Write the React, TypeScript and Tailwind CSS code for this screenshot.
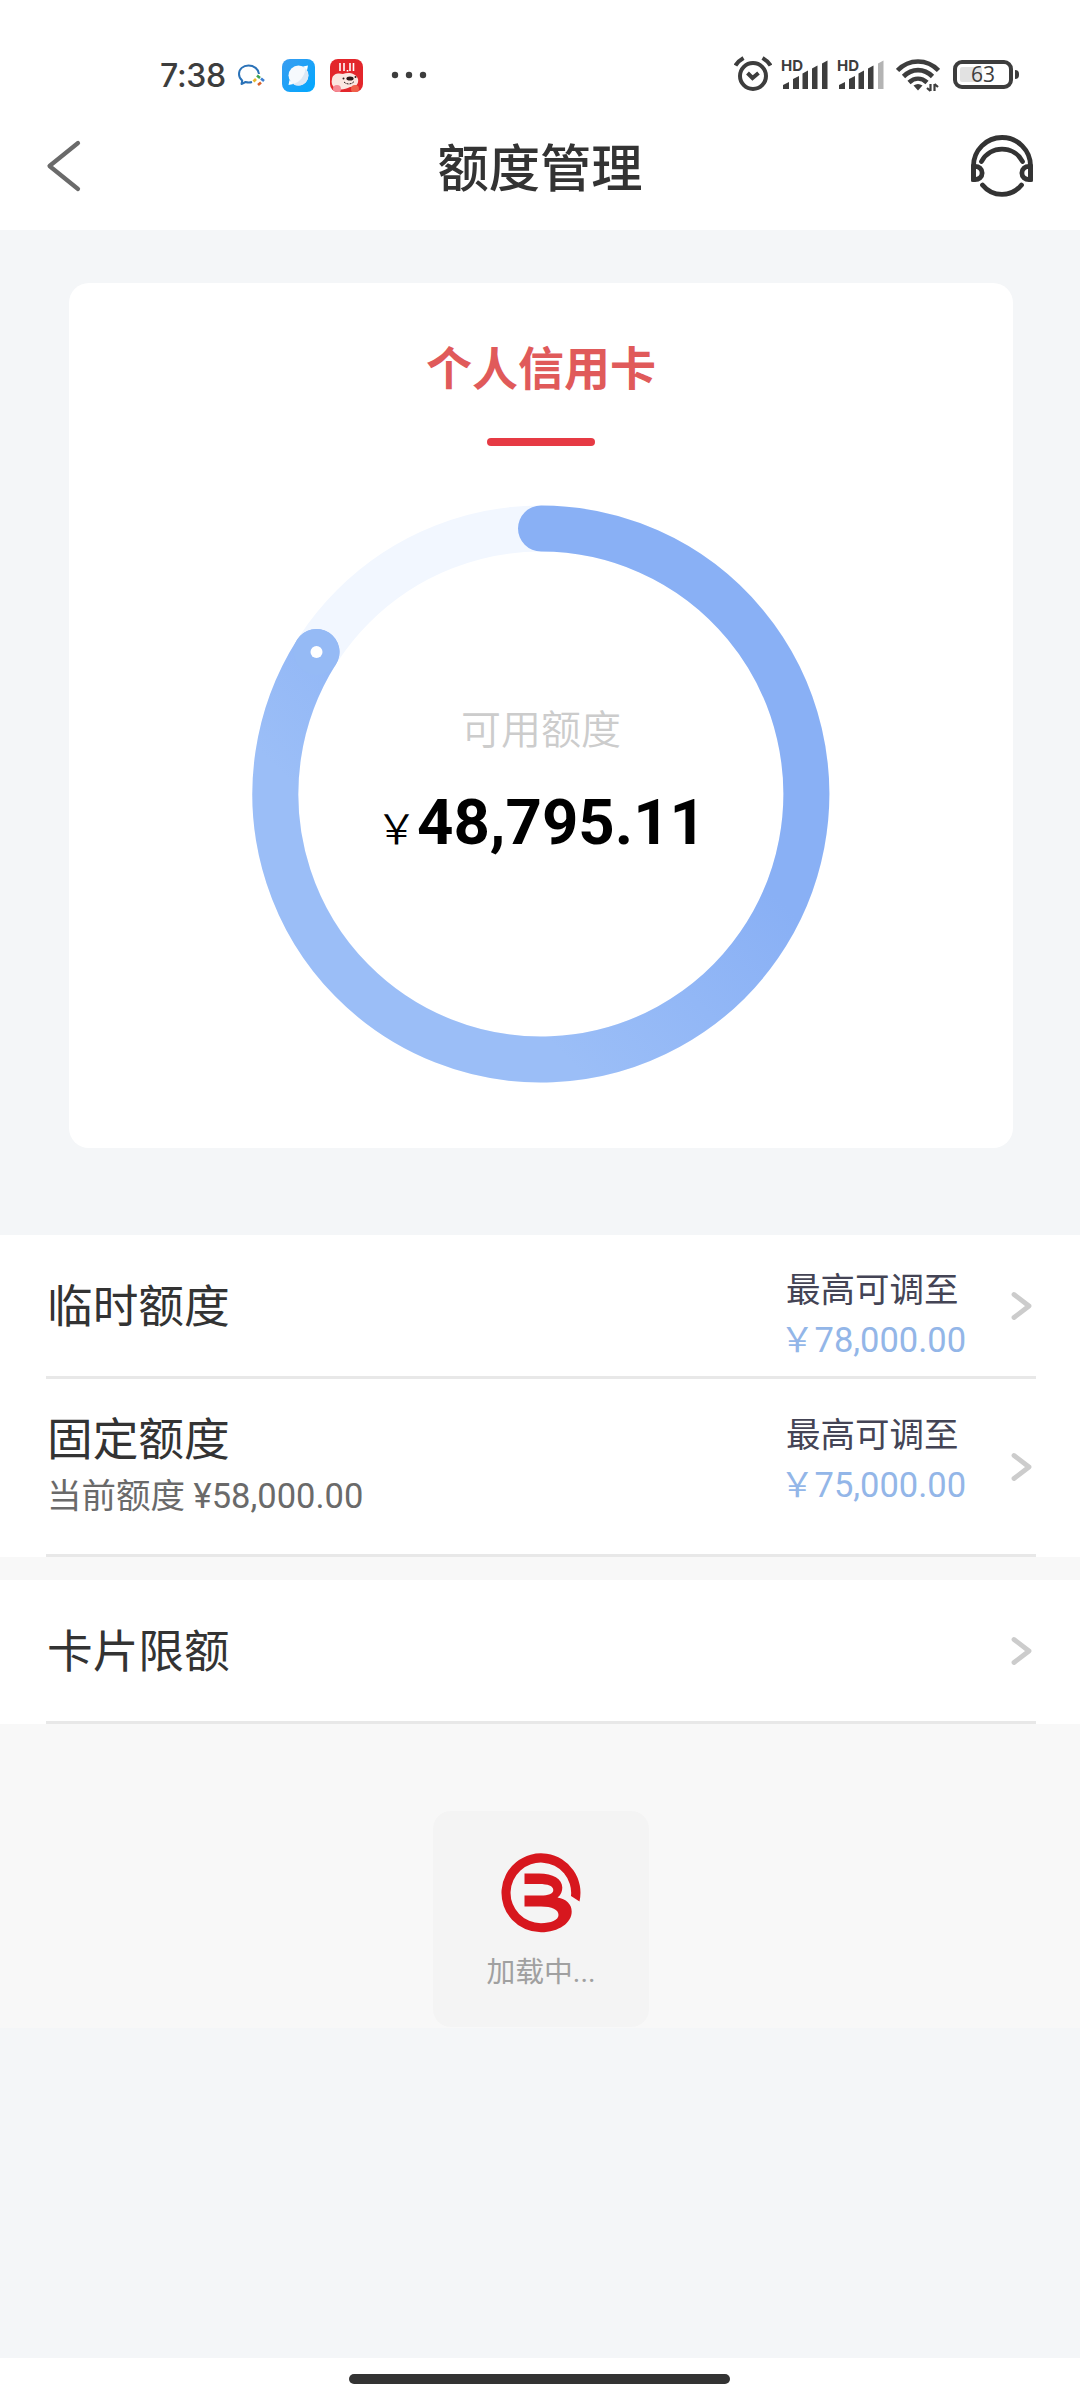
// src/App.tsx
type LimitRowProps = {
  title: string;
  current?: string;
  max?: string;
  className: string;
  maxClassName?: string;
};

const RADIUS = 265.5;
// end of the used arc, relative to a 578x578 dial
const KNOB = { x: 64.5, y: 147 };

function StatusBar() {
  return (
    <div className="flex h-[110px] items-start pt-[54px] text-[#3d3d3d]">
      <span className="ml-[160px] w-[68px] whitespace-nowrap font-['Inter'] text-[32px] leading-[43px] font-medium tracking-[-0.3px]">7:38</span>

      {/* Notification icons */}
      <svg className="ml-[9px] mt-[9px]" width="30" height="26" viewBox="0 0 30 26" fill="none">
        <path d="M22 11c-.5-5-5-8.500-10.500-8.500C6 2.500 2 6 2 11c0 3 1.200 5 3.200 6.600L4.500 21l4-2c2.500.8 4.500.7 6.500 0" stroke="#2a72b8" strokeWidth="2" strokeLinejoin="round" />
        <path d="M20 12.500l3 2.500" stroke="#3fa650" strokeWidth="2.600" />
        <path d="M24 15.500l3 2.500" stroke="#3b7fd0" strokeWidth="2.600" />
        <path d="M21 22l3-2.500" stroke="#d9622b" strokeWidth="2.600" />
        <path d="M16.500 18.500l2.500-2.500" stroke="#e8b72a" strokeWidth="2.600" />
      </svg>
      <svg className="ml-[15px] mt-[5px]" width="33" height="33" viewBox="0 0 33 33">
        <defs>
          <linearGradient id="browser" x1="0" y1="0" x2="1" y2="1">
            <stop offset="0" stopColor="#3a9cf0" />
            <stop offset="1" stopColor="#00a8ff" />
          </linearGradient>
        </defs>
        <rect width="33" height="33" rx="8" fill="url(#browser)" />
        <circle cx="16.500" cy="16.500" r="10" fill="#f6f9fd" />
        <path d="M21 7.500l5-1-1 5zM7.500 21l-1 5 5-1z" fill="#fff" />
        <path d="M23.500 9.500c5.500 6 2.500 17-7 17-2.500 0-4-.5-5-1.500 6-2 11-7 12-15.500z" fill="#dce8f5" />
      </svg>
      <svg className="ml-[15px] mt-[5px]" width="33" height="33" viewBox="0 0 33 33">
        <defs>
          <clipPath id="app">
            <rect width="33" height="33" rx="8" />
          </clipPath>
        </defs>
        <g clipPath="url(#app)">
          <rect width="33" height="33" fill="#e3262b" />
          <path d="M10 4v8M14 4v8M17.500 11v1.500M20 4v8M23.500 4v8" stroke="#fff" strokeWidth="1.600" />
          <path d="M2 20c1-6 7-6 11-5 5-2 13-1 15 5 1 5-2 8-8 8-5 3-12 3-15 1-3-2-4-5-3-9z" fill="#fbe6e0" />
          <ellipse cx="20" cy="19.500" rx="3.600" ry="2" fill="#2a1a1a" />
          <circle cx="13.500" cy="19.500" r="1" fill="#2a1a1a" />
          <circle cx="25.500" cy="18" r="1" fill="#2a1a1a" />
          <path d="M14 23c3 3 8 2.500 10.500-1" stroke="#2a1a1a" strokeWidth="1" strokeDasharray="2 1" fill="none" />
          <circle cx="7" cy="30" r="4" fill="#f58a94" />
          <circle cx="25" cy="30" r="4" fill="#f0604a" />
        </g>
      </svg>
      <svg className="ml-[28px] mt-[17px]" width="36" height="8" viewBox="0 0 36 8" fill="currentColor">
        <circle cx="4" cy="4" r="3.200" />
        <circle cx="18" cy="4" r="3.200" />
        <circle cx="32" cy="4" r="3.200" />
      </svg>

      {/* System icons */}
      <svg className="ml-[307px] mt-[2px]" width="38" height="36" viewBox="0 0 38 36" fill="none" stroke="currentColor" strokeWidth="4">
        <circle cx="19" cy="20" r="13" />
        <path d="M13.500 17l5 5 6-5" />
        <path d="M1.500 9.500c2-3.500 4.500-5.500 8-7.500M36.500 9.500c-2-3.500-4.500-5.500-8-7.500" />
      </svg>
      <Signal className="ml-[9px]" lastBar="#3d3d3d" />
      <Signal className="ml-[8px]" lastBar="#b4b4b4" />
      <svg className="ml-[11px] mt-[4px]" width="44" height="34" viewBox="0 0 44 34" fill="none" stroke="currentColor" strokeWidth="4.600">
        <path d="M1.500 12.500c11.500-12 29.500-12 41 0" />
        <path d="M7.500 18.500c8.500-8.500 20.500-8.500 29 0" />
        <path d="M13 24.500c5.500-5 12.500-5 18 0" />
        <path d="M17.500 27.500c3-2 6-2 9 0L22 32.500z" fill="currentColor" stroke="none" />
        <path d="M34.500 26v7M38.500 33v-7M34.500 33l-3.500-3M38.500 26l3.500 3" strokeWidth="2.200" />
      </svg>
      <div className="ml-[13px] mt-[6px] flex items-center">
        <div className="relative flex h-[29px] w-[60px] items-center justify-center rounded-[9px] border-[4px] border-[#3d3d3d]">
          <div className="absolute left-[3px] top-[3px] h-[15px] w-[22px] rounded-[2px] bg-[#e2e2e2]" />
          <span className="relative font-['Open_Sans'] text-[21px] leading-[21px] font-medium">63</span>
        </div>
        <div className="ml-[2px] h-[9px] w-[4px] rounded-r-[4px] bg-[#3d3d3d]" />
      </div>
    </div>
  );
}

function Signal({ className, lastBar }: { className: string; lastBar: string }) {
  return (
    <div className={`${className} h-[37px] w-[48px]`}>
      <div className="h-[20px] pt-[2px] font-['Inter'] text-[15px] leading-[19px] font-bold">HD</div>
      <svg className="-mt-[15px]" width="48" height="32" viewBox="0 0 48 32" fill="currentColor">
        <path d="M2 30v-4l6-3v7z" />
        <path d="M12 30V20l6-3v13z" />
        <path d="M21.500 30V14.500l5.500-3V30z" />
        <path d="M31 30V9.500l5.500-3V30z" />
        <path d="M41 30V4.500l5.500-3V30z" fill={lastBar} />
      </svg>
    </div>
  );
}

function Header() {
  return (
    <div className="flex h-[120px] items-start justify-between px-[46px]">
      <svg className="mt-[29px]" width="64" height="54" viewBox="0 0 64 54" fill="none" stroke="#6a6a6a" strokeWidth="4.200" strokeLinecap="round" strokeLinejoin="round">
        <path d="M32 4L3.500 27 32 50" />
      </svg>
      <h1 className="mt-[23px] text-[51.300px] leading-[74px] font-medium text-[#333]">额度管理</h1>
      <svg className="mt-[25px]" width="64" height="64" viewBox="0 0 64 64" fill="none" stroke="#333" strokeWidth="4.800" strokeLinecap="round">
        <path d="M3.500 44.500V31a28.500 28.500 0 0 1 57 0v13.500" />
        <path d="M3.500 31.500c11.500-1.500 11.500 14.500 0 13zM60.500 31.500c-11.500-1.500-11.500 14.500 0 13z" />
        <path d="M11.500 26.500c8.500-16.500 32.500-16.500 41 0" />
        <path d="M12.500 50c10 12.500 29 12.500 39 0" />
      </svg>
    </div>
  );
}

function CreditDial() {
  return (
    <div className="relative mt-[58px] h-[578px] w-[578px]">
      <svg width="578" height="578" viewBox="0 0 578 578" fill="none">
        <defs>
          <linearGradient id="dial" x1="0.400" y1="0.850" x2="0.750" y2="0.500">
            <stop offset="0" stopColor="#9bbef7" />
            <stop offset="1" stopColor="#89b0f5" />
          </linearGradient>
        </defs>
        <circle cx="289" cy="289" r={RADIUS} stroke="#f2f7ff" strokeWidth="46" />
        <path
          d={`M289 23.500A${RADIUS} ${RADIUS} 0 1 1 ${KNOB.x} ${KNOB.y}`}
          stroke="url(#dial)"
          strokeWidth="46"
          strokeLinecap="round"
        />
        <circle cx={KNOB.x} cy={KNOB.y} r="23" fill="#95baf5" />
        <circle cx={KNOB.x} cy={KNOB.y} r="6" fill="#fff" />
      </svg>
      <div className="absolute inset-0 flex flex-col items-center pt-[197px]">
        <div className="text-[40px] leading-[58px] font-[350] text-[#ccc]">可用额度</div>
        <div className="mt-[25px] flex items-baseline leading-[75px] text-black">
          <span className="text-[41px] font-[350]">￥</span>
          <span className="font-['Roboto'] text-[63.500px] font-bold">48,795.11</span>
        </div>
      </div>
    </div>
  );
}

function LimitRow({ title, current, max, className, maxClassName }: LimitRowProps) {
  return (
    <div className={`bg-white pl-[46px] pr-[44px] ${className}`}>
      <div className="flex h-full items-center border-b-[3px] border-[#e8e8e8]">
        <div className="flex-1 pl-[1px] pt-[4px]">
          <div className="text-[45.700px] leading-[60px] text-[#333]">{title}</div>
          {current && <div className="mb-[6px] text-[34.500px] leading-[50px] text-[#6a6a6a]">当前额度 {current}</div>}
        </div>
        {max && (
          <div className={`mr-[46px] w-[179px] whitespace-nowrap text-[34.500px] leading-[50px] ${maxClassName}`}>
            <div className="text-[#445]">最高可调至</div>
            <div className="-ml-[6px] text-[#93b6e8]">￥{max}</div>
          </div>
        )}
        <svg className="mr-[3px] mt-[1px]" width="22" height="30" viewBox="0 0 22 30" fill="none" stroke="#ccc" strokeWidth="4.800" strokeLinecap="round" strokeLinejoin="round">
          <path d="M3 3.500l15 11.500L3 26.500" />
        </svg>
      </div>
    </div>
  );
}

function Loading() {
  return (
    <div className="ml-[2px] flex h-[216px] w-[216px] flex-col items-center rounded-[18px] bg-[#f4f4f4]">
      <svg className="mt-[42px]" width="80" height="80" viewBox="0 0 80 80" fill="#d7171e">
        <path d="M78.500 48.500A39.500 39.500 0 1 0 40 79.300C58 79 70.700 70 70.700 58.500C70.700 51 65 46 56.500 44.500C60 42 61.300 38 61.300 34.500C61.300 26 52 20.500 38 20.500H23.500V31H38C47 31 52.300 33 52.300 37C52.300 41 47 42.500 40 42.500H23.500V53.500H40C51 53.500 57.500 56.500 57.500 62C57.500 67 50 70.200 40 70.200A30.300 30.300 0 1 1 70 43z" />
      </svg>
      <div className="mt-[18px] text-[28.800px] leading-[42px] text-[#a0a0a0]">加载中...</div>
    </div>
  );
}

export default function App() {
  return (
    <div className="flex h-[2400px] w-[1080px] flex-col overflow-hidden bg-[#f4f6f8] font-['Roboto','Noto_Sans_CJK_SC',sans-serif]">
      <div className="bg-white">
        <StatusBar />
        <Header />
      </div>

      {/* Card */}
      <div className="ml-[69px] mt-[53px] flex h-[865px] w-[944px] flex-col items-center rounded-[20px] bg-white">
        <div className="mt-[53px] text-[46px] leading-[66px] font-bold text-[#e05a5a]">个人信用卡</div>
        <div className="mt-[36px] mb-[1px] h-[8px] w-[108px] rounded-full bg-[#e63a44]" />
        <CreditDial />
      </div>

      {/* Limits */}
      <div className="mt-[87px] flex flex-col bg-[#f8f8f8]">
        <LimitRow title="临时额度" max="78,000.00" className="h-[144px]" maxClassName="pt-[19px]" />
        <LimitRow title="固定额度" current="¥58,000.00" max="75,000.00" className="h-[178px]" maxClassName="pb-[13px]" />
        <LimitRow title="卡片限额" className="mt-[23px] h-[144px]" />
        <div className="flex h-[304px] justify-center pt-[87px]">
          <Loading />
        </div>
      </div>

      <div className="mt-auto flex h-[42px] bg-white pl-[349px] pt-[16px]">
        <div className="h-[10px] w-[381px] rounded-full bg-[#333]" />
      </div>
    </div>
  );
}
